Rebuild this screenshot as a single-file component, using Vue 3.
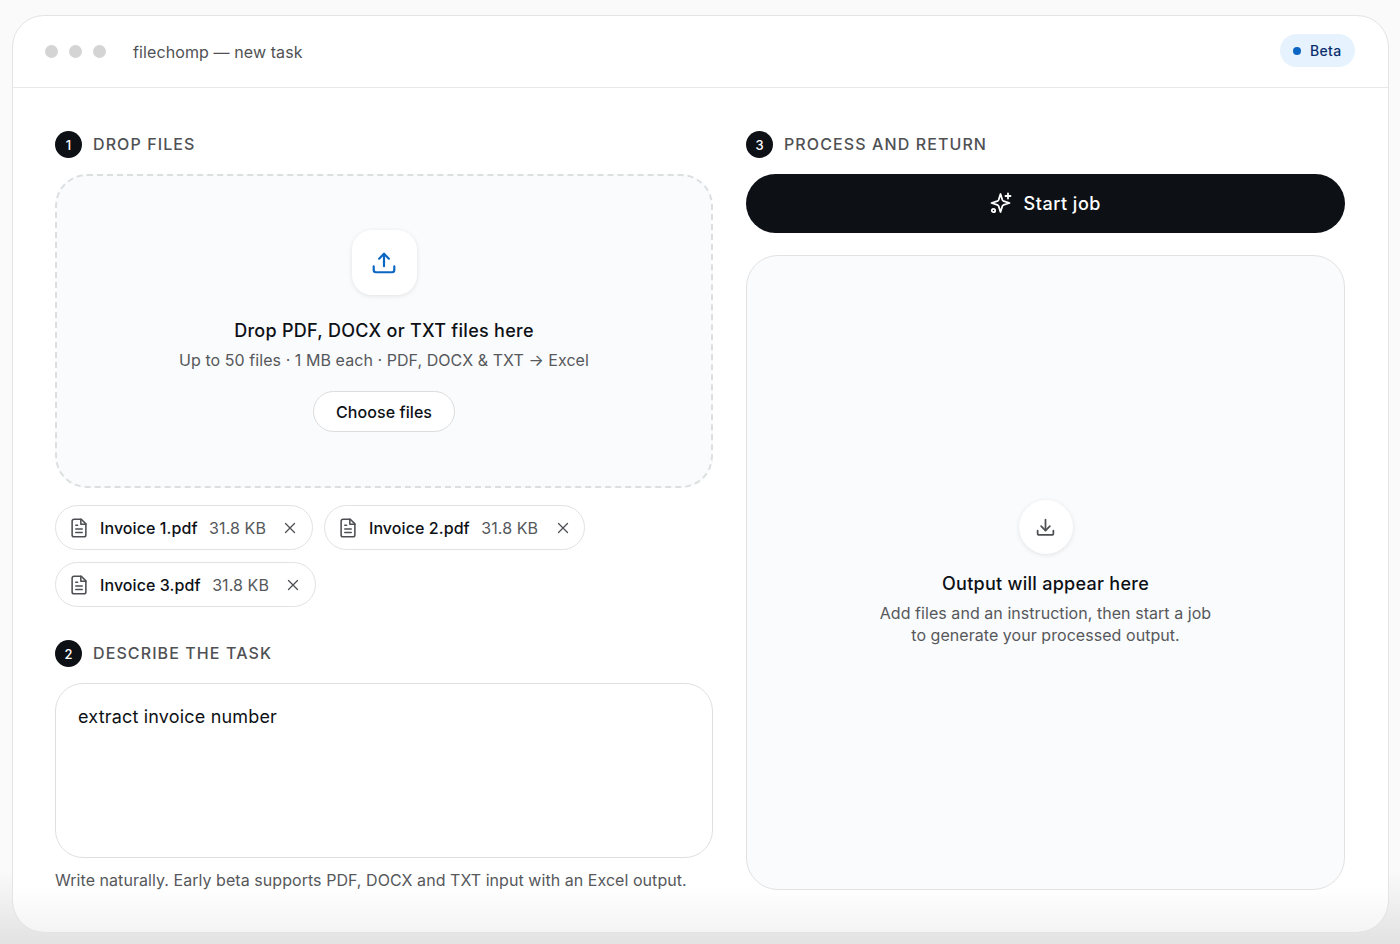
<script setup>
import { ref } from 'vue';

const task = ref('extract invoice number');

const files = [
  { name: 'Invoice 1.pdf', size: '31.8 KB' },
  { name: 'Invoice 2.pdf', size: '31.8 KB' },
  { name: 'Invoice 3.pdf', size: '31.8 KB' },
];
</script>

<template>
  <div class="page">
    <div class="window">
      <header class="titlebar">
        <div class="dots">
          <span class="dot"></span>
          <span class="dot"></span>
          <span class="dot"></span>
        </div>
        <span class="title">filechomp — new task</span>
        <div class="beta">
          <span class="beta-dot"></span>
          Beta
        </div>
      </header>

      <main class="content">
        <section class="col-left">
          <div class="step">
            <span class="step-num">1</span>
            <span class="step-label">DROP FILES</span>
          </div>

          <div class="dropzone">
            <div class="upload-icon">
              <svg width="26" height="26" viewBox="0 0 24 24" fill="none" stroke="#0b66c3" stroke-width="2" stroke-linecap="round" stroke-linejoin="round">
                <path d="M12 15V3.500" />
                <path d="M7.500 8 12 3.500 16.500 8" />
                <path d="M2.500 15v3.500a2 2 0 0 0 2 2h15a2 2 0 0 0 2-2V15" />
              </svg>
            </div>
            <h2 class="drop-title">Drop PDF, DOCX or TXT files here</h2>
            <p class="drop-sub">Up to 50 files · 1 MB each · PDF, DOCX &amp; TXT → Excel</p>
            <button class="choose">Choose files</button>
          </div>

          <div class="chips">
            <div class="chip" v-for="file in files" :key="file.name">
              <svg width="22" height="22" viewBox="0 0 24 24" fill="none" stroke="#4d4f52" stroke-width="1.700" stroke-linecap="round" stroke-linejoin="round">
                <path d="M14.500 2.500H6.500a2 2 0 0 0-2 2v15a2 2 0 0 0 2 2h11a2 2 0 0 0 2-2v-12z" />
                <path d="M14 2.500v5.500h5.500" />
                <path d="M8.500 9h2M8.500 13h7M8.500 17h7" />
              </svg>
              <span class="chip-name">{{ file.name }}</span>
              <span class="chip-size">{{ file.size }}</span>
              <svg class="chip-x" width="12" height="12" viewBox="0 0 12 12" fill="none" stroke="#4d4f52" stroke-width="1.300" stroke-linecap="round">
                <path d="M1.500 1.500l9 9M10.500 1.500l-9 9" />
              </svg>
            </div>
          </div>

          <div class="step step-two">
            <span class="step-num">2</span>
            <span class="step-label">DESCRIBE THE TASK</span>
          </div>

          <textarea class="task" v-model="task"></textarea>
          <p class="hint">Write naturally. Early beta supports PDF, DOCX and TXT input with an Excel output.</p>
        </section>

        <section class="col-right">
          <div class="step">
            <span class="step-num">3</span>
            <span class="step-label">PROCESS AND RETURN</span>
          </div>

          <button class="start">
            <svg width="24" height="24" viewBox="0 0 24 24" fill="none" stroke="#fff" stroke-width="1.800" stroke-linecap="round" stroke-linejoin="round">
              <path d="M10.500 2 12.400 8Q12.800 8.900 13.700 9.200L19.500 11 13.700 12.800Q12.800 13.100 12.400 14L10.500 20 8.600 14Q8.200 13.100 7.300 12.800L1.500 11 7.300 9.200Q8.200 8.900 8.600 8z" />
              <path d="M18 1.500v5M15.500 4h5" />
              <circle cx="3.500" cy="18.500" r="1.700" />
            </svg>
            Start job
          </button>

          <div class="output">
            <div class="download-icon">
              <svg width="21" height="21" viewBox="0 0 24 24" fill="none" stroke="#4d4f52" stroke-width="2" stroke-linecap="round" stroke-linejoin="round">
                <path d="M12 3v12" />
                <path d="M7 10.500l5 5 5-5" />
                <path d="M3 15.500v3a2 2 0 0 0 2 2h14a2 2 0 0 0 2-2v-3" />
              </svg>
            </div>
            <h2 class="output-title">Output will appear here</h2>
            <p class="output-sub">Add files and an instruction, then start a job<br>to generate your processed output.</p>
          </div>
        </section>
      </main>
    </div>
  </div>
</template>

<style scoped>
.page {
  height: 944px;
  padding: 15px 11px 11px 12px;
  box-sizing: border-box;
  background: linear-gradient(to bottom, #fafafa 870px, #e2e2e2 944px);
  overflow: hidden;
  font-family: Inter, "Liberation Sans", sans-serif;
}

.window {
  height: 100%;
  box-sizing: border-box;
  background: linear-gradient(to bottom, #fff calc(100% - 45px), #f4f4f4 100%);
  background-clip: padding-box;
  border: 1.500px solid #e4e4e4;
  border-radius: 32px;
  display: flex;
  flex-direction: column;
}

.titlebar {
  height: 71px;
  flex-shrink: 0;
  display: flex;
  align-items: center;
  padding: 0 33px 0 32px;
  border-bottom: 1.500px solid #e8e8e8;
}

.dots {
  display: flex;
  gap: 11px;
}

.dot {
  width: 13px;
  height: 13px;
  border-radius: 50%;
  background: #d4d4d4;
}

.title {
  margin-left: 27px;
  font-size: 16px;
  letter-spacing: 0.1px;
  color: #4f5154;
}

.beta {
  margin: -2px 0 0 auto;
  height: 33px;
  padding: 0 13.500px;
  border-radius: 17px;
  background: #e6f2fe;
  display: flex;
  align-items: center;
  gap: 9px;
  font-size: 14px;
  font-weight: 500;
  letter-spacing: 0.3px;
  color: #0b2f6e;
}

.beta-dot {
  width: 8px;
  height: 8px;
  border-radius: 50%;
  background: #0b66c3;
}

.content {
  display: grid;
  grid-template-columns: 658px 599px;
  column-gap: 33px;
  padding: 43px 0 0 42px;
}

.step {
  display: flex;
  align-items: center;
  gap: 11px;
  height: 27px;
}

.step-num {
  width: 27px;
  height: 27px;
  border-radius: 50%;
  background: #0d1116;
  color: #fff;
  font-size: 13px;
  font-weight: 500;
  display: flex;
  align-items: center;
  justify-content: center;
}

.step-label {
  padding-bottom: 2px;
  font-size: 16px;
  font-weight: 500;
  letter-spacing: 1.100px;
  color: #4f5154;
}

.dropzone {
  margin-top: 16px;
  height: 314px;
  box-sizing: border-box;
  border: 2px dashed #dcdfe0;
  border-radius: 32px;
  background: #fafbfd;
  display: flex;
  flex-direction: column;
  align-items: center;
  padding-top: 54px;
}

.upload-icon {
  width: 65px;
  height: 65px;
  border-radius: 20px;
  background: #fff;
  box-shadow: 0 1px 5px rgba(0, 0, 0, 0.1);
  display: flex;
  align-items: center;
  justify-content: center;
}

.drop-title {
  margin: 24px 0 0;
  font-size: 18px;
  line-height: 24px;
  font-weight: 500;
  letter-spacing: 0.28px;
  color: #0d1116;
}

.drop-sub {
  margin: 6px 0 0;
  font-size: 16px;
  line-height: 22px;
  letter-spacing: 0.06px;
  color: #56585b;
}

.choose {
  margin-top: 20px;
  height: 41px;
  padding: 0 21.500px;
  border: 1px solid #dcdcdc;
  border-radius: 21px;
  background: #fff;
  font-family: inherit;
  font-size: 16px;
  font-weight: 500;
  letter-spacing: 0.08px;
  color: #0d1116;
}

.chips {
  margin-top: 17px;
  display: flex;
  flex-wrap: wrap;
  gap: 12px 11px;
}

.chip {
  height: 45px;
  box-sizing: border-box;
  padding: 0 15.500px 0 12px;
  border: 1px solid #e2e2e2;
  border-radius: 23px;
  display: flex;
  align-items: center;
  font-size: 16px;
  letter-spacing: 0.08px;
}

.chip-name {
  margin-left: 10px;
  font-weight: 500;
  color: #0d1116;
}

.chip-size {
  margin-left: 11.500px;
  color: #56585b;
}

.chip-x {
  margin-left: 18.500px;
}

.step-two {
  margin-top: 33px;
}

.task {
  display: block;
  width: 100%;
  height: 175px;
  margin-top: 15.500px;
  box-sizing: border-box;
  padding: 21px 22px;
  border: 1px solid #dfdfdf;
  border-radius: 28px;
  outline: none;
  resize: none;
  background: #fff;
  font-family: inherit;
  font-size: 18px;
  line-height: 24px;
  letter-spacing: 0.18px;
  color: #0d1116;
}

.hint {
  margin: 11px 0 0;
  font-size: 16px;
  line-height: 22px;
  letter-spacing: 0.05px;
  color: #56585b;
}

.start {
  width: 100%;
  height: 59px;
  margin-top: 16px;
  border: none;
  border-radius: 30px;
  background: #0d1116;
  color: #fff;
  font-family: inherit;
  font-size: 18px;
  font-weight: 500;
  letter-spacing: 0.5px;
  display: flex;
  align-items: center;
  justify-content: center;
  gap: 9.500px;
}

.output {
  height: 635px;
  margin-top: 22px;
  box-sizing: border-box;
  border: 1px solid #e2e2e2;
  border-radius: 32px;
  background: #fafbfd;
  display: flex;
  flex-direction: column;
  align-items: center;
  padding-top: 244px;
}

.download-icon {
  width: 54px;
  height: 54px;
  border-radius: 50%;
  background: #fff;
  box-shadow: 0 1px 5px rgba(0, 0, 0, 0.1);
  display: flex;
  align-items: center;
  justify-content: center;
}

.output-title {
  margin: 18px 0 0;
  font-size: 18px;
  line-height: 24px;
  font-weight: 500;
  letter-spacing: 0.27px;
  color: #0d1116;
}

.output-sub {
  margin: 6px 0 0;
  text-align: center;
  font-size: 16px;
  line-height: 22px;
  letter-spacing: 0.05px;
  color: #56585b;
}
</style>

<style>
body {
  margin: 0;
}
</style>
